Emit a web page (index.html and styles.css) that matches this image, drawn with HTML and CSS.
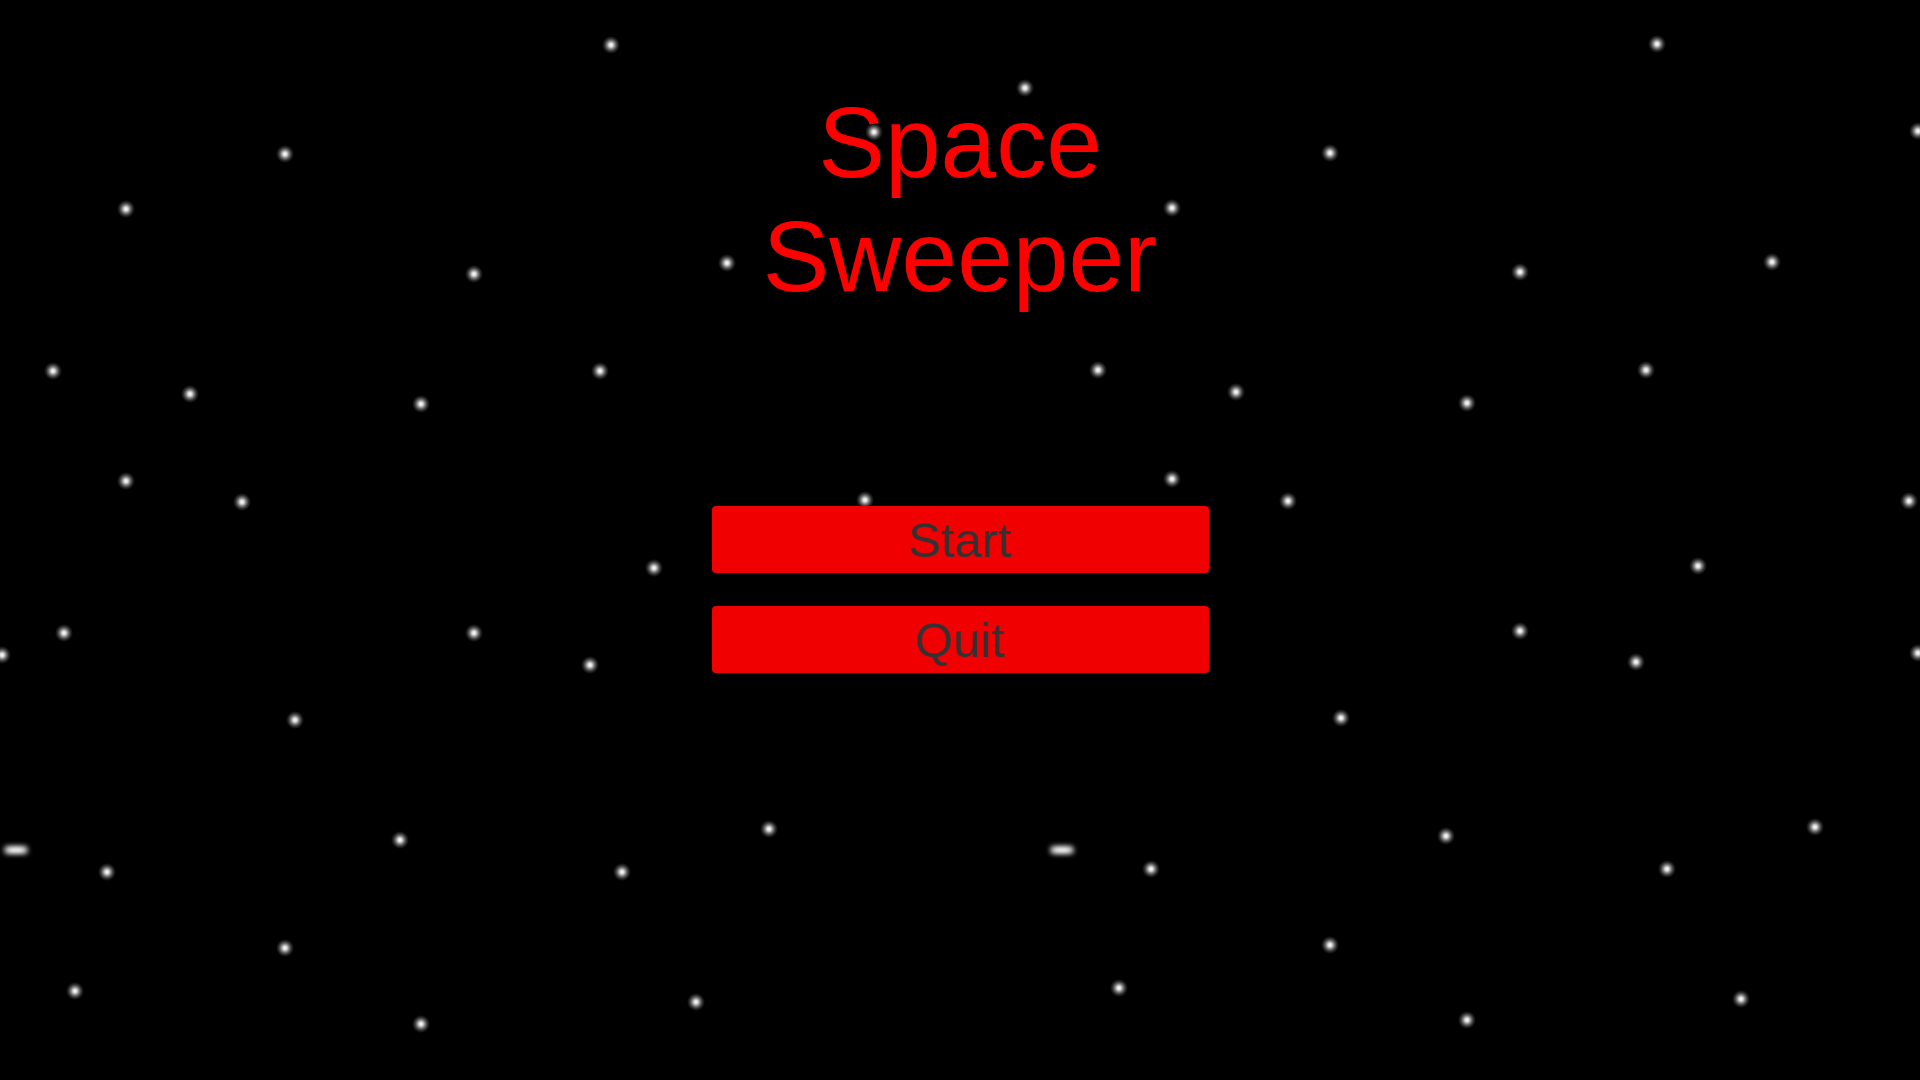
FILE: index.html
```html
<!DOCTYPE html>
<html lang="en">
<head>
<meta charset="utf-8">
<title>Space Sweeper</title>
<link rel="stylesheet" href="styles.css">
</head>
<body>
<div class="sky">
  <span class="star" style="left:611px;top:45px"></span>
  <span class="star" style="left:1025px;top:88px"></span>
  <span class="star" style="left:1657px;top:44px"></span>
  <span class="star" style="left:1918px;top:131px"></span>
  <span class="star" style="left:285px;top:154px"></span>
  <span class="star" style="left:1330px;top:153px"></span>
  <span class="star" style="left:126px;top:209px"></span>
  <span class="star" style="left:474px;top:274px"></span>
  <span class="star" style="left:1520px;top:272px"></span>
  <span class="star" style="left:1772px;top:262px"></span>
  <span class="star" style="left:53px;top:371px"></span>
  <span class="star" style="left:190px;top:394px"></span>
  <span class="star" style="left:421px;top:404px"></span>
  <span class="star" style="left:600px;top:371px"></span>
  <span class="star" style="left:1098px;top:370px"></span>
  <span class="star" style="left:1236px;top:392px"></span>
  <span class="star" style="left:1467px;top:403px"></span>
  <span class="star" style="left:1646px;top:370px"></span>
  <span class="star" style="left:126px;top:481px"></span>
  <span class="star" style="left:242px;top:502px"></span>
  <span class="star" style="left:865px;top:500px"></span>
  <span class="star" style="left:1172px;top:479px"></span>
  <span class="star" style="left:1288px;top:501px"></span>
  <span class="star" style="left:1909px;top:501px"></span>
  <span class="star" style="left:654px;top:568px"></span>
  <span class="star" style="left:1698px;top:566px"></span>
  <span class="star" style="left:2px;top:655px"></span>
  <span class="star" style="left:64px;top:633px"></span>
  <span class="star" style="left:474px;top:633px"></span>
  <span class="star" style="left:590px;top:665px"></span>
  <span class="star" style="left:1520px;top:631px"></span>
  <span class="star" style="left:1636px;top:662px"></span>
  <span class="star" style="left:1918px;top:653px"></span>
  <span class="star" style="left:295px;top:720px"></span>
  <span class="star" style="left:1341px;top:718px"></span>
  <span class="star streak" style="left:16px;top:850px"></span>
  <span class="star" style="left:107px;top:872px"></span>
  <span class="star" style="left:400px;top:840px"></span>
  <span class="star" style="left:622px;top:872px"></span>
  <span class="star" style="left:769px;top:829px"></span>
  <span class="star streak" style="left:1062px;top:850px"></span>
  <span class="star" style="left:1151px;top:869px"></span>
  <span class="star" style="left:1446px;top:836px"></span>
  <span class="star" style="left:1667px;top:869px"></span>
  <span class="star" style="left:1815px;top:827px"></span>
  <span class="star" style="left:285px;top:948px"></span>
  <span class="star" style="left:1330px;top:945px"></span>
  <span class="star" style="left:75px;top:991px"></span>
  <span class="star" style="left:421px;top:1024px"></span>
  <span class="star" style="left:696px;top:1002px"></span>
  <span class="star" style="left:1119px;top:988px"></span>
  <span class="star" style="left:1467px;top:1020px"></span>
  <span class="star" style="left:1741px;top:999px"></span>
</div>
<main class="menu">
  <h1 class="title">Space<br>Sweeper</h1>
  <div class="buttons">
    <button class="btn" type="button">Start</button>
    <button class="btn" type="button">Quit</button>
  </div>
</main>
<div class="sky sky-front">
  <span class="star" style="left:874px;top:132px"></span>
  <span class="star" style="left:727px;top:263px"></span>
  <span class="star" style="left:1172px;top:208px"></span>
</div>
</body>
</html>
```

FILE: styles.css
```css
html, body {
  margin: 0;
  padding: 0;
  width: 1920px;
  height: 1080px;
  overflow: hidden;
  background: #000;
}

body {
  position: relative;
  font-family: "Liberation Sans", Arial, sans-serif;
}

.sky {
  position: absolute;
  inset: 0;
  pointer-events: none;
}

.sky-front {
  z-index: 2;
}

.star {
  position: absolute;
  width: 18px;
  height: 18px;
  transform: translate(-50%, -50%);
  border-radius: 50%;
  background: radial-gradient(circle,
    #ffffff 0,
    rgba(255, 255, 255, 0.85) 2px,
    rgba(255, 255, 255, 0.5) 4px,
    rgba(255, 255, 255, 0.18) 6.5px,
    rgba(255, 255, 255, 0) 9px);
}

.star.streak {
  width: 24px;
  height: 8px;
  border-radius: 3px;
  background: linear-gradient(90deg,
    rgba(255, 255, 255, 0.6),
    #ffffff 30%,
    #ffffff 70%,
    rgba(255, 255, 255, 0.6));
  filter: blur(2.5px);
}

.menu {
  position: relative;
  z-index: 1;
  display: flex;
  flex-direction: column;
  align-items: center;
  padding-top: 85px;
}

.title {
  margin: 0;
  font-family: "Liberation Sans", Arial, sans-serif;
  font-weight: normal;
  font-size: 100px;
  line-height: 114px;
  color: #ff0000;
  text-align: center;
}

.buttons {
  margin-top: 193px;
  display: flex;
  flex-direction: column;
  gap: 33px;
}

.btn {
  width: 497px;
  height: 67px;
  padding: 2px 0 0;
  border: none;
  border-radius: 4px;
  background: #f00000;
  color: #323232;
  font-family: "Liberation Sans", Arial, sans-serif;
  font-size: 49px;
  line-height: 1;
  text-align: center;
  cursor: pointer;
}
```
